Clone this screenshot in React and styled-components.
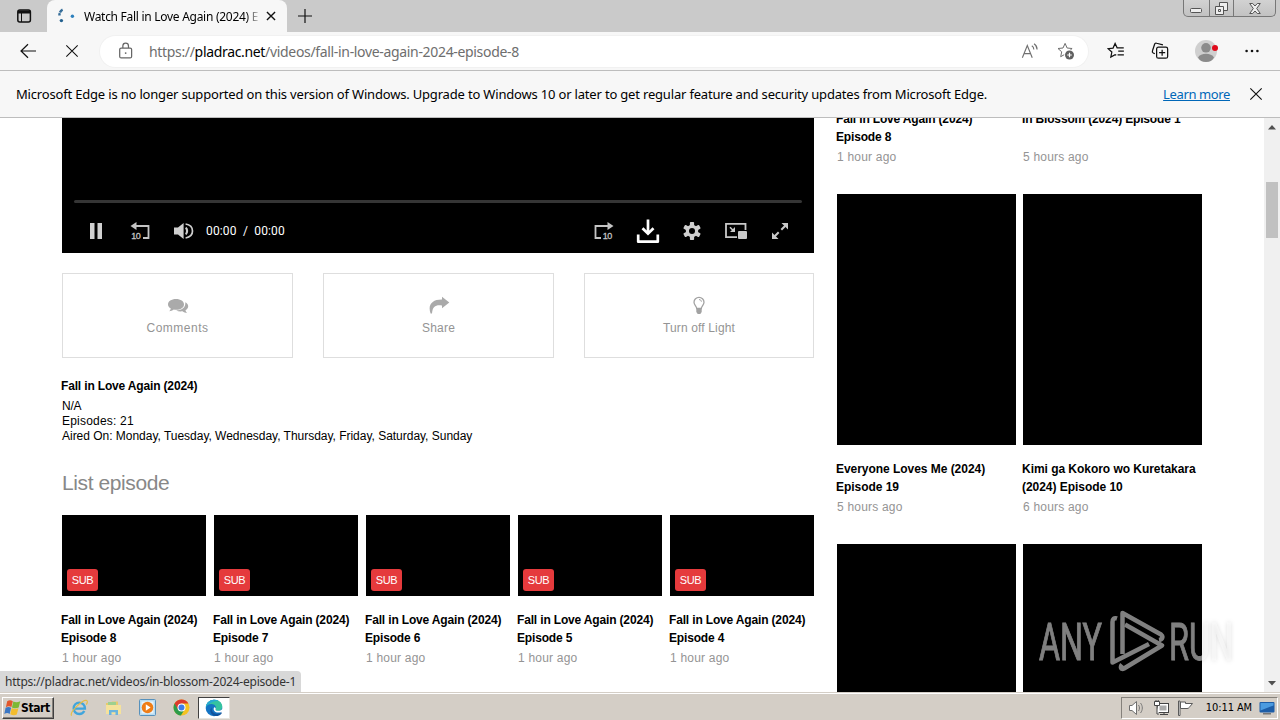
import React from 'react'
import styled, { createGlobalStyle } from 'styled-components'

const UI_FONT = '"Noto Sans", "Open Sans", sans-serif'
const PAGE_FONT = '"Liberation Sans", Arial, sans-serif'
const CLASSIC_FONT = '"DejaVu Sans Condensed", "DejaVu Sans", sans-serif'

const BG_CHROME = '#f7f7f7'
const BG_STRIP = '#cacaca'
const BG_TASKBAR = '#d4cec6'
const BORDER_CHROME = '#bdbdbd'
const TEXT_MUTED = '#949494'

const GlobalStyle = createGlobalStyle`
  * {
    box-sizing: border-box;
  }
  body {
    margin: 0;
    overflow: hidden;
    background: #fff;
  }
  svg {
    display: block;
    flex: none;
  }
`

const Screen = styled.div`
  width: 1280px;
  height: 720px;
  display: flex;
  flex-direction: column;
  overflow: hidden;
  position: relative;
  font-family: ${UI_FONT};
  color: #000;
`

/* browser chrome */

const TabStrip = styled.div`
  height: 32px;
  flex: none;
  display: flex;
  background: ${BG_STRIP};
`

const TabMenu = styled.div`
  width: 47px;
  height: 32px;
  display: flex;
  align-items: center;
  justify-content: center;
`

const Tab = styled.div`
  width: 240px;
  height: 32px;
  padding: 0 9px 0 10px;
  display: flex;
  align-items: center;
  border-radius: 8px 8px 0 0;
  background: ${BG_CHROME};
`

const TabTitle = styled.div`
  width: 174px;
  margin: 0 8px 0 9px;
  overflow: hidden;
  white-space: nowrap;
  font-size: 12px;
  letter-spacing: -0.28px;
  mask-image: linear-gradient(90deg, #000 162px, transparent 177px);
`

const NewTab = styled.div`
  width: 36px;
  display: flex;
  align-items: center;
  justify-content: center;
`

const WindowButtons = styled.div`
  width: 93px;
  height: 17px;
  margin: 0 4px 0 auto;
  display: flex;
  border: 1px solid #777;
  border-top: 0;
  border-radius: 0 0 5px 5px;
  background: linear-gradient(#d2d2d2, #c2c2c2);
  overflow: hidden;
`

const WindowButton = styled.div`
  width: ${(props) => props.$width}px;
  display: flex;
  align-items: center;
  justify-content: center;
  & + & {
    border-left: 1px solid #777;
  }
`

const Toolbar = styled.div`
  height: 39px;
  flex: none;
  padding: 0 6px;
  display: flex;
  align-items: center;
  background: ${BG_CHROME};
  border-bottom: 1px solid ${BORDER_CHROME};
`

const ToolButton = styled.div`
  width: ${(props) => props.$width || 44}px;
  height: 38px;
  display: flex;
  align-items: center;
  justify-content: center;
`

const AddressBar = styled.div`
  flex: 1;
  height: 31px;
  margin: 0 6px;
  padding: 0 13px 0 17px;
  display: flex;
  align-items: center;
  border-radius: 16px;
  background: #fff;
  box-shadow: 0 0 0 1px #f1f1f1;
`

const Url = styled.div`
  flex: 1;
  margin-left: 14px;
  font-size: 14px;
  letter-spacing: -0.33px;
  color: #6e6e6e;
  b {
    font-weight: 400;
    color: #000;
  }
`

const AddressIcons = styled.div`
  display: flex;
  gap: 18px;
`

const InfoBar = styled.div`
  height: 47px;
  flex: none;
  padding: 0 17px 1px 16px;
  display: flex;
  align-items: center;
  background: ${BG_CHROME};
  border-bottom: 1px solid ${BORDER_CHROME};
  font-size: 13px;
`

const InfoText = styled.div`
  flex: 1;
  white-space: nowrap;
  letter-spacing: -0.18px;
`

const InfoLink = styled.a`
  margin-right: 19px;
  color: #0067b8;
  letter-spacing: -0.38px;
  text-decoration: underline;
`

/* page */

const Viewport = styled.div`
  height: 574px;
  flex: none;
  display: flex;
  overflow: hidden;
  background: #fff;
  font-family: ${PAGE_FONT};
`

const Page = styled.div`
  width: 1264px;
  padding-left: 62px;
  display: flex;
  gap: 23px;
`

const Main = styled.div`
  width: 752px;
`

const Player = styled.div`
  height: 135px;
  padding: 82px 12px 0;
  background: #000;
`

const Track = styled.div`
  height: 3px;
  border-radius: 2px;
  background: #353535;
`

const Controls = styled.div`
  height: 44px;
  margin-top: 6px;
  display: flex;
  align-items: center;
`

const Control = styled.div`
  width: 44px;
  height: 44px;
  display: flex;
  align-items: center;
  justify-content: center;
`

const Time = styled.div`
  flex: 1;
  font-family: Roboto, sans-serif;
  font-size: 12px;
  letter-spacing: 0.15px;
  white-space: pre;
  color: #fff;
`

const Actions = styled.div`
  margin-top: 20px;
  display: grid;
  grid-template-columns: 231px 231px 230px;
  gap: 30px;
`

const Action = styled.div`
  height: 85px;
  padding-top: 22px;
  display: flex;
  flex-direction: column;
  align-items: center;
  border: 1px solid #dedede;
  font-size: 12px;
  line-height: 16px;
  letter-spacing: ${(props) => props.$spacing || 0}px;
  color: ${TEXT_MUTED};
  svg {
    margin-bottom: 5px;
  }
`

const Title = styled.div`
  margin-left: -1px;
  font-size: 12px;
  font-weight: 700;
  line-height: 18px;
  letter-spacing: ${(props) => (props.$loose ? -0.04 : -0.16)}px;
  white-space: nowrap;
`

const Details = styled.div`
  margin: 19px 0 2px;
`

const Facts = styled.div`
  margin-top: 4px;
  font-size: 12px;
  line-height: 15px;
`

const Fact = styled.div`
  letter-spacing: ${(props) => props.$spacing}px;
`

const Heading = styled.div`
  height: 30px;
  margin: 24px 0 17px;
  font-size: 21px;
  line-height: 30px;
  letter-spacing: -0.4px;
  color: #888;
`

const Episodes = styled.div`
  display: grid;
  grid-template-columns: repeat(5, 144px);
  gap: 8px;
`

const Thumb = styled.div`
  height: ${(props) => props.$height}px;
  margin-bottom: 15px;
  padding: 5px;
  display: flex;
  align-items: flex-end;
  background: #000;
`

const Sub = styled.div`
  width: 31px;
  height: 22px;
  border-radius: 3px;
  background: #e53a3c;
  color: #fff;
  font-size: 11px;
  line-height: 22px;
  letter-spacing: -0.3px;
  text-align: center;
`

const Meta = styled.div`
  margin-top: 2px;
  font-size: 12px;
  line-height: 18px;
  letter-spacing: 0.2px;
  color: ${TEXT_MUTED};
`

const Sidebar = styled.div`
  width: 365px;
  /* the list is scrolled past most of its first row */
  margin-top: -274px;
  display: grid;
  grid-template-columns: repeat(2, 179px);
  grid-auto-rows: 350px;
  column-gap: 7px;
`

const SidebarTitle = styled(Title)`
  height: 36px;
`

const Scrollbar = styled.div`
  width: 16px;
  padding: 7px 0 6px;
  display: flex;
  flex-direction: column;
  align-items: center;
  background: #f0f0f0;
`

const ScrollHandle = styled.div`
  width: 12px;
  height: 56px;
  margin: 52px 0 auto;
  background: #c1c1c1;
`

const StatusBubble = styled.div`
  position: absolute;
  left: 0;
  bottom: 28px;
  width: 301px;
  height: 21px;
  padding-left: 5px;
  border-radius: 0 4px 0 0;
  background: #d8d8d8;
  color: #333;
  font-size: 12px;
  line-height: 21px;
  letter-spacing: -0.22px;
  white-space: nowrap;
`

const Watermark = styled.svg`
  position: absolute;
  left: 1036px;
  top: 606px;
  filter: drop-shadow(0 0 2px rgba(0, 0, 0, 0.25));
  font-family: Roboto, sans-serif;
`

/* taskbar */

const Taskbar = styled.div`
  height: 28px;
  flex: none;
  padding: 2px 2px 0;
  display: flex;
  align-items: center;
  background: ${BG_TASKBAR};
  border-top: 1px solid ${BG_TASKBAR};
  box-shadow: inset 0 1px 0 #fff;
  font-family: ${CLASSIC_FONT};
`

const StartButton = styled.div`
  width: 52px;
  height: 22px;
  padding-left: 1px;
  display: flex;
  align-items: center;
  border: 1px solid;
  border-color: #fff #404040 #404040 #fff;
  box-shadow: inset -1px -1px 0 #85817b;
  font-size: 12px;
  font-weight: 700;
  letter-spacing: -0.4px;
`

const Launchers = styled.div`
  margin-left: 8px;
  display: flex;
  align-items: center;
`

const Launcher = styled.div`
  width: ${(props) => (props.$active ? 32 : 34)}px;
  height: 22px;
  display: flex;
  align-items: center;
  justify-content: center;
  ${(props) => props.$active && `
    background: #fff;
    border: 1px solid;
    border-color: #404040 #e8e4de #e8e4de #404040;
  `}
`

const Tray = styled.div`
  width: 157px;
  height: 22px;
  margin-left: auto;
  padding: 0 2px 0 6px;
  display: flex;
  align-items: center;
  border: 1px solid;
  border-color: #85817b #fff #fff #85817b;
`

const TrayIcon = styled.div`
  width: 31px;
  display: flex;
  justify-content: center;
`

const Clock = styled.div`
  flex: 1;
  margin-right: 7px;
  text-align: right;
  font-size: 11px;
  letter-spacing: -0.1px;
  white-space: nowrap;
`

const Stroke = ({ size = 16, width = 1.2, color = '#111', children }) => (
  <svg width={size} height={size} viewBox="0 0 16 16" fill="none" stroke={color} strokeWidth={width}>
    {children}
  </svg>
)

const TabMenuIcon = () => (
  <Stroke size={16} width={1.5}>
    <rect x="1.8" y="2" width="12.6" height="12" rx="2" />
    <path d="M2 4h12" strokeWidth="3" />
    <path d="M5.5 5v9" strokeWidth="1" />
  </Stroke>
)

const SpinnerIcon = () => (
  <svg width="18" height="18" viewBox="0 0 18 18" fill="none">
    <path d="M5.6 2.6C3.6 3.6 2.4 5.8 2.4 8.4" stroke="#356d99" strokeWidth="2.4" strokeDasharray="4 .6" />
    <circle cx="4.4" cy="13.6" r="1.7" fill="#24618f" />
    <circle cx="15.4" cy="9.2" r="1.7" fill="#2d80bd" />
  </svg>
)

const CloseIcon = ({ size = 14, width = 1.1 }) => (
  <Stroke size={size} width={width}><path d="M1.5 1.5l13 13m0-13l-13 13" /></Stroke>
)

const BackIcon = () => (
  <Stroke size={16} width={1.2}><path d="M16 8H.9M8 1.2L1 8l7 6.8" /></Stroke>
)

const LockIcon = () => (
  <Stroke size={18} width={1.1} color="#666">
    <rect x="2.4" y="5.4" width="10.6" height="8.8" rx="1.3" />
    <path d="M5.2 5.4V3.600a2.500 2.500 0 015 0v1.800" />
    <circle cx="7.700" cy="9.800" r=".8" fill="#666" stroke="none" />
  </Stroke>
)

const ReadAloudIcon = () => (
  <Stroke size={18} width={1} color="#707070">
    <path d="M1.2 14L5.6 3.2 10 14M2.8 10.3h5.6" />
    <path d="M9.6 3.4c1.2.8 1.8 1.8 1.8 3.2M11.6 1.6c1.8 1.2 2.7 2.9 2.7 5" />
  </Stroke>
)

const AddFavoriteIcon = () => (
  <svg width="18" height="18" viewBox="0 0 18 18" fill="none">
    <path d="M8.1 1.400l2 4.600 5 .5-3.700 3.300 1 4.900-4.300-2.500-4.400 2.500 1-4.900L1 6.500l5-.5z" stroke="#6d6d6d" />
    <circle cx="12.500" cy="13" r="5.400" fill="#fff" />
    <circle cx="12.500" cy="13" r="4.500" fill="#606060" />
    <path d="M10.200 13h4.600M12.500 10.700v4.600" stroke="#fff" strokeWidth="1.200" />
  </svg>
)

const FavoritesIcon = () => (
  <Stroke size={18} width={1.1}>
    <path d="M14.9 5.2H9L7.2 1.3 5.4 5.4 1 5.9l3.3 3-.9 4.5 3.8-2.2 1 .6M10 8.2h5M9.4 11.4H15" />
  </Stroke>
)

const CollectionsIcon = () => (
  <Stroke size={18} width={1.1}>
    <path d="M3.4 10.5L2 9.8a1.6 1.6 0 01-.7-2L3.2 2a1.4 1.4 0 011.8-.9l5.6 1.4" />
    <rect x="5" y="4.6" width="9.8" height="9.8" rx="1.6" />
    <path d="M9.9 6.8v5.4M7.2 9.5h5.4" />
  </Stroke>
)

const AvatarIcon = () => (
  <svg width="24" height="24" viewBox="0 0 24 24">
    <circle cx="12" cy="12" r="11" fill="#cfcfcf" />
    <circle cx="12" cy="8.8" r="4.8" fill="#8b8b8b" />
    <path d="M4 18.5c1.4-2.6 4.500-3.800 8-3.800s6.600 1.200 8 3.800C18.500 21.500 15.500 23 12 23s-6.500-1.500-8-4.500z" fill="#8b8b8b" />
    <circle cx="21" cy="9" r="3" fill="#e00b1c" />
  </svg>
)

const MoreIcon = () => (
  <svg width="14" height="4" viewBox="0 0 14 4">
    {[1.6, 7, 12.4].map((x) => <circle key={x} cx={x} cy="2" r="1.3" fill="#111" />)}
  </svg>
)

const PauseIcon = () => (
  <svg width="14" height="16" viewBox="0 0 14 16" fill="#d0d0d0">
    <path d="M1 0h4.500v16H1zM8.500 0H13v16H8.500z" />
  </svg>
)

const SeekIcon = ({ forward }) => (
  <svg width="22" height="20" viewBox="0 0 22 20" fill="none" stroke="#c4c4c4" strokeWidth="1.8">
    {forward ? (
      <>
        <path d="M8 17H2.500V5H16" />
        <path d="M14.500 1l6 4-6 4z" fill="#c4c4c4" stroke="none" />
      </>
    ) : (
      <>
        <path d="M14 17h5.500V5H6" />
        <path d="M7.500 1l-6 4 6 4z" fill="#c4c4c4" stroke="none" />
      </>
    )}
    <text
      x={forward ? 9.8 : 2.2}
      y="17.500"
      fill="#c4c4c4"
      stroke="#c4c4c4"
      strokeWidth=".3"
      fontSize="9"
      textLength="9.500"
      fontFamily="Liberation Sans"
    >
      10
    </text>
  </svg>
)

const VolumeIcon = () => (
  <svg width="20" height="16" viewBox="0 0 20 16" fill="none" stroke="#cfcfcf" strokeWidth="1.700">
    <path d="M0 4.600h4L9.600 0v16L4 11.400H0z" fill="#cfcfcf" stroke="none" />
    <path d="M11.600 4.800c2 1.200 2 5.200 0 6.400" strokeWidth="2.200" />
    <path d="M11.600 1c9.200 1.600 9.200 12.400 0 14" />
  </svg>
)

const DownloadIcon = () => (
  <svg width="24" height="26" viewBox="0 0 24 26" fill="none" stroke="#fff" strokeWidth="2.700">
    <path d="M2.200 16.500v7.200h19.600v-7.200" strokeLinejoin="round" />
    <path d="M12 1.500v14M6.500 10.300l5.500 5.400 5.500-5.400" />
  </svg>
)

const SettingsIcon = () => (
  <svg width="18" height="18" viewBox="0 0 18 18">
    <g fill="#cfcfcf">
      {[0, 60, 120].map((a) => (
        <rect key={a} x="6.900" y="0" width="4.200" height="18" rx=".8" transform={`rotate(${a} 9 9)`} />
      ))}
      <circle cx="9" cy="9" r="6.200" />
    </g>
    <circle cx="9" cy="9" r="3" fill="#000" />
  </svg>
)

const PipIcon = () => (
  <svg width="24" height="18" viewBox="0 0 24 18" fill="none" stroke="#c9c9c9" strokeWidth="1.800">
    <path d="M13 15.100H2V1.900h19.500v6" />
    <path d="M6 5.200l3.500 3.500" strokeWidth="1.500" />
    <path d="M11 5v5H6z" fill="#c9c9c9" stroke="none" />
    <rect x="14" y="9" width="9" height="8" rx="1" fill="#c9c9c9" stroke="none" />
  </svg>
)

const ExpandIcon = () => (
  <svg width="18" height="18" viewBox="0 0 18 18" fill="#c9c9c9">
    <path d="M10.500 1H17v6.500zM7.500 17H1v-6.500z" />
    <path d="M10.300 7.700l4-4M7.700 10.300l-4 4" stroke="#c9c9c9" strokeWidth="2" />
  </svg>
)

const CommentsIcon = () => (
  <svg width="22" height="19" viewBox="0 0 22 19" fill="#aaa">
    <path d="M9 3c4.600 0 8 2.300 8 5.400s-3.400 5.400-8 5.400c-.8 0-1.500 0-2.200-.2-1.500 1.100-3 1.600-4.700 1.700.9-.8 1.500-1.600 1.700-2.800C2.100 11.500 1 10.100 1 8.400 1 5.300 4.400 3 9 3z" />
    <path d="M18.300 6.300c1.800.9 2.900 2.300 2.900 3.900 0 1.700-1.100 3.100-2.700 4 .2 1.200.8 2 1.700 2.800-1.800-.1-3.300-.7-4.700-1.700-2.300.4-4.600 0-6.400-.9 5.400.1 9.800-2.700 9.200-8.100z" />
  </svg>
)

const ShareIcon = () => (
  <svg width="22" height="19" viewBox="0 0 22 19" fill="#aaa">
    <path d="M14 .8L21.300 6.500 14 12.300V9.400C8.500 8.600 4.500 9.500 4 17.600H2.600C-.5 9 4 3.500 14 3.600z" />
  </svg>
)

const BulbIcon = () => (
  <svg width="14" height="19" viewBox="0 0 14 19" fill="none" stroke="#a2a2a2" strokeWidth="1.300">
    <path d="M4.700 12.500c0-2-2.700-3.400-2.700-6.200a5 5 0 0110 0c0 2.800-2.700 4.200-2.700 6.200z" />
    <path d="M7 3.600c1.500 0 2.400.8 2.400 2.100" strokeWidth="1" />
    <path d="M4.300 12h5.400v4L8.300 18H5.700l-1.400-2z" fill="#a2a2a2" stroke="none" />
  </svg>
)

const Flag = () => (
  <svg width="17" height="17" viewBox="0 0 16 16">
    <path d="M3 2c2-1.300 3.500-1.200 5.300 0L7 7.600c-1.700-1-3.400-1-5.200.2z" fill="#e2572c" />
    <path d="M8.800 2.300c2 1 3.800 1 6.500-.2L13.800 8c-2 1-3.900 1-6.300-.1z" fill="#7db834" />
    <path d="M1.500 8.300c1.800-1 3.500-1 5.200 0L5.300 14c-1.600-1.100-3.200-1-5 0z" fill="#3b77c4" />
    <path d="M7.300 8.500c2.100 1.100 3.900 1.200 6.300.2L12 14.600c-1.900 1-3.900.8-6.100-.2z" fill="#f3bd2f" />
  </svg>
)

const IeIcon = () => (
  <svg width="18" height="18" viewBox="0 0 18 18" fill="none">
    <path d="M14.300 12a5.600 5.600 0 01-5 3c-3.200 0-5.600-2.500-5.600-5.600s2.400-5.600 5.600-5.600 5.600 2.400 5.600 5.800H4.500" stroke="#40a5dc" strokeWidth="2.400" />
    <path d="M1.600 16.600C-1 13.500 13.500-.5 16.800 1.600c.9.700.5 2.300-.5 4" stroke="#e5bd45" strokeWidth="1.200" />
  </svg>
)

const ExplorerIcon = () => (
  <svg width="17" height="16" viewBox="0 0 17 16">
    <path d="M1 3h5l1-1.500h6V14H1z" fill="#e8ca6c" />
    <path d="M3 2h8v4H3z" fill="#9ed08f" />
    <path d="M1 5h15v9H1z" fill="#f5e29b" />
    <path d="M4 15v-5h9v5h-2.500v-2.700h-4V15z" fill="#6bb4dd" />
  </svg>
)

const PlayerIcon = () => (
  <svg width="17" height="17" viewBox="0 0 17 17">
    <rect x=".5" y=".5" width="16" height="16" rx="1" fill="#b9dcf1" stroke="#5791bc" />
    <rect x="2.500" y="2.500" width="12" height="12" fill="#e8f3fa" />
    <circle cx="8.500" cy="8.500" r="5.800" fill="#ef7d16" />
    <path d="M6.800 5.200l4.800 3.300-4.800 3.300z" fill="#fff" />
  </svg>
)

const ChromeIcon = () => (
  <svg width="17" height="17" viewBox="0 0 17 17">
    <circle cx="8.500" cy="8.500" r="8" fill="#f4c221" />
    <path d="M8.500 8.500L1.600 4.500a8 8 0 006.300 12l3.800-6.200z" fill="#2c9c4b" />
    <path d="M1.600 4.500a8 8 0 0113.800 0H8.500l-3.500 6z" fill="#dc3a2d" />
    <circle cx="8.500" cy="8.500" r="4" fill="#fff" />
    <circle cx="8.500" cy="8.500" r="3" fill="#3e7de8" />
  </svg>
)

const EdgeIcon = () => (
  <svg width="18" height="18" viewBox="0 0 18 18">
    <circle cx="9" cy="9" r="8.300" fill="#1474c4" />
    <path d="M.8 8C1.500 3.700 4.800.8 9 .8c5 0 8.300 3.200 8.300 6.700 0 2.700-2 4.300-4.500 4.300-1.800 0-2.700-.8-2.300-1.400C12 8 9.800 5 6.500 5 3.800 5 1.800 6.200.8 8z" fill="#35c3a0" />
    <path d="M.8 8C1.500 3.700 4.800.8 9 .8c2 0 3.500.5 4.800 1.300C9 1.500 4 4 .8 8z" fill="#28a9d4" />
    <path d="M6.800 8.500c-1 3 1.500 6.300 5.200 6.300 1.600 0 3-.4 4-1.100 1-.7 1 .2.600.7-2.600 3.200-7 3.400-9.400 1.100-2.300-2-2.500-5.300-.4-7z" fill="#10539c" />
    <path d="M9.300 8.300c-.8 1-1 2.500.1 3.800 1.600 1.900 4.800 1.900 7 .6l1.200.5V10l-2.300 1.500c-2.500.7-5.200.2-4.700-1.300.3-.8 0-1.700-1.300-1.900z" fill="#fff" />
  </svg>
)

const SpeakerTray = () => (
  <svg width="18" height="16" viewBox="0 0 18 16" fill="#fff" stroke="#6f6f6f">
    <path d="M1.500 5.500H4L8.500 1.500v13L4 10.500H1.500z" />
    <path d="M10.500 5c1.300 1.500 1.300 4.500 0 6M12.500 3c2.400 3 2.400 7 0 10" fill="none" strokeWidth=".9" />
  </svg>
)

const NetworkTray = () => (
  <svg width="18" height="16" viewBox="0 0 18 16" fill="#fff" stroke="#444">
    <rect x="4.500" y="3.500" width="11" height="9" />
    <rect x="6.500" y="5.500" width="7" height="5" fill="#aaa" stroke="none" />
    <path d="M7 14.500h8M11 12.500v2M1.500 1.500h5v4h-5zM4 5.500V14h2M3 0v2M5.200 0v2" />
  </svg>
)

const FlagTray = () => (
  <svg width="17" height="16" viewBox="0 0 17 16" fill="#fff" stroke="#5a5a5a">
    <path d="M1.500 1v14.500h1.500V1z" />
    <path d="M3.500 2h5v1.500h7L13 6.500c-.6 1-1.500 2-3 2H3.500z" />
  </svg>
)

const MonitorTray = () => (
  <svg width="16" height="14" viewBox="0 0 16 14">
    <rect x=".5" y="1" width="15" height="10.500" rx="1" fill="#1d5da7" />
    <path d="M1.500 2h13v2.500l-13 5z" fill="#4b9be0" />
    <path d="M4 12h8v1.500H4z" fill="#777" />
  </svg>
)

const Arrow = ({ down }) => (
  <svg width="8" height="5" viewBox="0 0 8 5">
    <path d={down ? 'M0 0h8L4 4.500z' : 'M0 4.500h8L4 0z'} fill="#505050" />
  </svg>
)

const SIDEBAR_ITEMS = [
  { lines: ['Fall in Love Again (2024)', 'Episode 8'], ago: '1 hour ago' },
  { lines: ['In Blossom (2024) Episode 1'], ago: '5 hours ago' },
  { lines: ['Everyone Loves Me (2024)', 'Episode 19'], ago: '5 hours ago', loose: true },
  { lines: ['Kimi ga Kokoro wo Kuretakara', '(2024) Episode 10'], ago: '6 hours ago', loose: true },
  { lines: [], ago: '' },
  { lines: [], ago: '' }
]

const BrowserChrome = () => (
  <>
    <TabStrip>
      <TabMenu><TabMenuIcon /></TabMenu>
      <Tab>
        <SpinnerIcon />
        <TabTitle>Watch Fall in Love Again (2024) Episode 8</TabTitle>
        <CloseIcon size={10} width={2.2} />
      </Tab>
      <NewTab>
        <Stroke size={16} width={1.2}><path d="M8 1v14M1 8h14" /></Stroke>
      </NewTab>
      <WindowButtons>
        <WindowButton $width={25}>
          <svg width="12" height="12" viewBox="0 0 12 12">
            <rect x=".5" y="6.500" width="11" height="4" rx="1" fill="#eee" stroke="#555" />
          </svg>
        </WindowButton>
        <WindowButton $width={25}>
          <svg width="13" height="13" viewBox="0 0 13 13" fill="#eee" stroke="#555">
            <path d="M4.500.5h8v8h-8z" />
            <path d="M.5 4.500h8v8h-8zM3.500 7.500h2v2h-2z" />
          </svg>
        </WindowButton>
        <WindowButton $width={42}>
          <svg width="12" height="11" viewBox="0 0 12 11" fill="#eee" stroke="#555">
            <path d="M.7.500h3L6 3 8.300.500h3L7.700 5.500l3.600 5h-3L6 8l-2.300 2.500h-3l3.600-5z" />
          </svg>
        </WindowButton>
      </WindowButtons>
    </TabStrip>
    <Toolbar>
      <ToolButton><BackIcon /></ToolButton>
      <ToolButton><CloseIcon size={14} width={1.2} /></ToolButton>
      <AddressBar>
        <LockIcon />
        <Url>https://<b>pladrac.net</b>/videos/fall-in-love-again-2024-episode-8</Url>
        <AddressIcons>
          <ReadAloudIcon />
          <AddFavoriteIcon />
        </AddressIcons>
      </AddressBar>
      <ToolButton><FavoritesIcon /></ToolButton>
      <ToolButton><CollectionsIcon /></ToolButton>
      <ToolButton $width={48}><AvatarIcon /></ToolButton>
      <ToolButton><MoreIcon /></ToolButton>
    </Toolbar>
    <InfoBar>
      <InfoText>
        Microsoft Edge is no longer supported on this version of Windows. Upgrade to Windows 10 or later to get regular feature and security updates from Microsoft Edge.
      </InfoText>
      <InfoLink>Learn more</InfoLink>
      <CloseIcon size={14} width={1.3} />
    </InfoBar>
  </>
)

const VideoPlayer = () => (
  <Player>
    <Track />
    <Controls>
      <Control><PauseIcon /></Control>
      <Control><SeekIcon /></Control>
      <Control><VolumeIcon /></Control>
      <Time>00:00  /  00:00</Time>
      <Control><SeekIcon forward /></Control>
      <Control><DownloadIcon /></Control>
      <Control><SettingsIcon /></Control>
      <Control><PipIcon /></Control>
      <Control><ExpandIcon /></Control>
    </Controls>
  </Player>
)

const App = () => (
  <Screen>
    <GlobalStyle />
    <BrowserChrome />
    <Viewport>
      <Page>
        <Main>
          <VideoPlayer />
          <Actions>
            <Action $spacing={0.5}><CommentsIcon />Comments</Action>
            <Action $spacing={0.2}><ShareIcon />Share</Action>
            <Action $spacing={0.15}><BulbIcon />Turn off Light</Action>
          </Actions>
          <Details>
            <Title>Fall in Love Again (2024)</Title>
            <Facts>
              <Fact $spacing={-0.2}>N/A</Fact>
              <Fact $spacing={0.2}>Episodes: 21</Fact>
              <Fact $spacing={-0.02}>Aired On: Monday, Tuesday, Wednesday, Thursday, Friday, Saturday, Sunday</Fact>
            </Facts>
          </Details>
          <Heading>List episode</Heading>
          <Episodes>
            {[8, 7, 6, 5, 4].map((n) => (
              <div key={n}>
                <Thumb $height={81}><Sub>SUB</Sub></Thumb>
                <Title>Fall in Love Again (2024)<br />Episode {n}</Title>
                <Meta>1 hour ago</Meta>
              </div>
            ))}
          </Episodes>
        </Main>
        <Sidebar>
          {SIDEBAR_ITEMS.map((item, i) => (
            <div key={i}>
              <Thumb $height={251} />
              <SidebarTitle $loose={item.loose}>
                {item.lines.map((line) => <div key={line}>{line}</div>)}
              </SidebarTitle>
              <Meta>{item.ago}</Meta>
            </div>
          ))}
        </Sidebar>
      </Page>
      <Scrollbar>
        <Arrow />
        <ScrollHandle />
        <Arrow down />
      </Scrollbar>
    </Viewport>
    <Taskbar>
      <StartButton><Flag />Start</StartButton>
      <Launchers>
        <Launcher><IeIcon /></Launcher>
        <Launcher><ExplorerIcon /></Launcher>
        <Launcher><PlayerIcon /></Launcher>
        <Launcher><ChromeIcon /></Launcher>
        <Launcher $active><EdgeIcon /></Launcher>
      </Launchers>
      <Tray>
        <SpeakerTray />
        <TrayIcon><NetworkTray /></TrayIcon>
        <FlagTray />
        <Clock>10:11 AM</Clock>
        <MonitorTray />
      </Tray>
    </Taskbar>
    <StatusBubble>https://pladrac.net/videos/in-blossom-2024-episode-1</StatusBubble>
    <Watermark width="200" height="72" viewBox="0 0 200 72">
      <g fill="#fff" stroke="#fff" strokeWidth="1" opacity=".5">
        <text x="3" y="53.500" fontSize="52" textLength="63" lengthAdjust="spacingAndGlyphs">ANY</text>
        <text x="133" y="53.500" fontSize="52" textLength="64" lengthAdjust="spacingAndGlyphs">RUN</text>
      </g>
      <g fill="none" stroke="#fff" strokeWidth="4.500" strokeLinejoin="round" opacity=".5">
        <path d="M81 12.500c-3-1-4.500.5-4.500 3.500v40.500L113 38" />
        <path d="M86.500 48V7l38.500 21.500c2.500 2 1.500 5-2 5.500" />
        <path d="M89 18.500l37 21L88 62.500c-3 1.500-4-1.500-2-4" />
      </g>
    </Watermark>
  </Screen>
)

export default App
